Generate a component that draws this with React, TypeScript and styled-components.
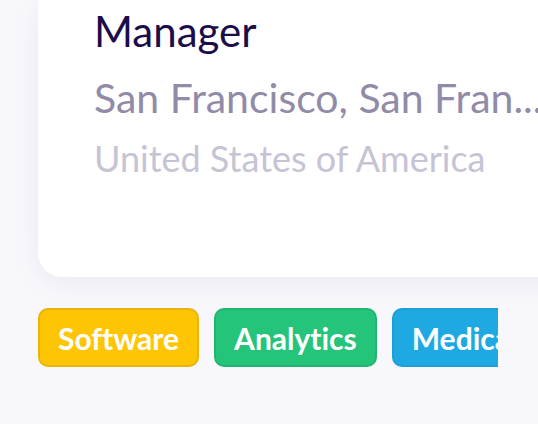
import styled, { createGlobalStyle } from "styled-components";

const GlobalStyle = createGlobalStyle`
  html, body {
    margin: 0;
    padding: 0;
    background: #f8f8fc;
    font-family: Lato, "Noto Sans", sans-serif;
    font-variant-ligatures: none;
    overflow: hidden;
  }
`;

const Page = styled.div`
  width: 538px;
  height: 424px;
  overflow: hidden;
  padding-left: 38px;
  box-sizing: border-box;
`;

const Card = styled.div`
  width: 560px;
  background: #fff;
  border-radius: 0 0 24px 24px;
  box-shadow: 0 6px 30px rgba(40, 30, 110, 0.07);
  padding: 6px 0 0 56px;
  box-sizing: border-box;
  height: 277px;
  display: flex;
  flex-direction: column;
`;

const Title = styled.h2`
  margin: 0;
  font-size: 42px;
  font-weight: 400;
  line-height: 50px;
  color: #1b0c4a;
`;

const City = styled.div`
  margin-top: 18px;
  font-size: 41px;
  line-height: 48px;
  color: #918ba8;
  white-space: nowrap;
`;

const Country = styled.div`
  margin-top: 14px;
  font-size: 36px;
  line-height: 44px;
  color: #c6c4d4;
  white-space: nowrap;
`;

const Tags = styled.div`
  display: flex;
  gap: 15px;
  width: 460px;
  overflow: hidden;
  margin-top: 31px;
`;

const Tag = styled.span<{ $bg: string; $border: string }>`
  flex-shrink: 0;
  height: 59px;
  box-sizing: border-box;
  padding: 0 18px;
  display: flex;
  align-items: center;
  background: ${(p) => p.$bg};
  border: 2px solid ${(p) => p.$border};
  border-radius: 10px;
  color: #fff;
  font-weight: 700;
  font-size: 30px;
`;

const tags = [
  { label: "Software", bg: "#fec505", border: "#eab308" },
  { label: "Analytics", bg: "#25c47b", border: "#21b670" },
  { label: "Medical", bg: "#1ea9e2", border: "#1d9ed6" },
];

export default function App() {
  return (
    <Page>
      <GlobalStyle />
      <Card>
        <Title>Manager</Title>
        <City>San Francisco, San Fran...</City>
        <Country>United States of America</Country>
      </Card>
      <Tags>
        {tags.map((t) => (
          <Tag key={t.label} $bg={t.bg} $border={t.border}>
            {t.label}
          </Tag>
        ))}
      </Tags>
    </Page>
  );
}
